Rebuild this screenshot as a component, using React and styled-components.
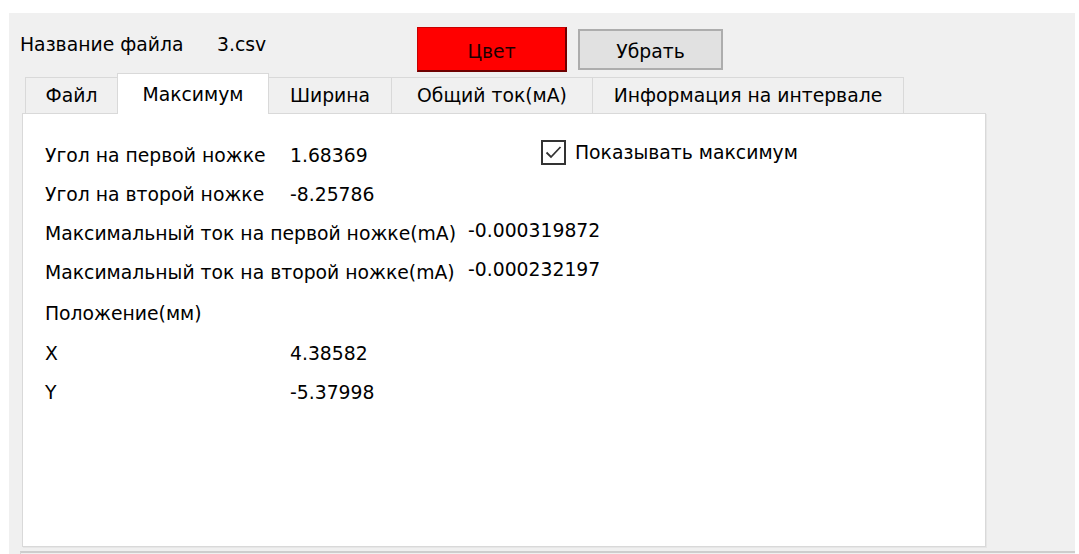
import React from 'react';
import styled, { createGlobalStyle } from 'styled-components';

const Global = createGlobalStyle`
  html, body { margin: 0; padding: 0; background: #ffffff; }
  body {
    font-family: "DejaVu Sans", "Noto Sans", sans-serif;
    font-size: 18.8px;
    color: #000;
  }
`;

const Window = styled.div`
  margin: 13px 4px 0 9px;
  height: 541px;
  background: #f0f0f0;
  display: flex;
  flex-direction: column;
  overflow: hidden;
`;

const Header = styled.div`
  height: 60px;
  display: flex;
  align-items: flex-start;
  padding-left: 11px;
  flex: none;
`;

const Caption = styled.span`
  width: ${p => p.$w}px;
  flex: none;
  padding-top: 21px;
  line-height: 22px;
  white-space: nowrap;
`;

const Actions = styled.div`
  display: flex;
  align-items: center;
  gap: 11px;
  margin-top: 14px;
  height: 45px;
`;

const ColorButton = styled.button`
  box-sizing: border-box;
  width: 150px;
  height: 45px;
  background: #ff0000;
  color: #1a0000;
  font: inherit;
  padding: 4px 0 0;
  border-style: solid;
  border-width: 1px 2px 2px 1px;
  border-color: #c80000 #6e0000 #6e0000 #c80000;
`;

const PlainButton = styled.button`
  box-sizing: border-box;
  width: 145px;
  height: 41px;
  background: #e1e1e1;
  color: #000;
  font: inherit;
  padding: 4px 0 0;
  border: 2px solid #adadad;
`;

const Tabs = styled.div`
  margin-left: 13px;
  width: 964px;
  display: flex;
  flex-direction: column;
  flex: none;
`;

const TabBar = styled.div`
  height: 40px;
  display: flex;
  align-items: flex-end;
  padding-left: 3px;
`;

const Tab = styled.div`
  box-sizing: border-box;
  width: ${p => p.$w}px;
  height: ${p => (p.$active ? 41 : 36)}px;
  margin-left: ${p => (p.$first ? 0 : -1)}px;
  margin-bottom: ${p => (p.$active ? -1 : 0)}px;
  position: relative;
  z-index: ${p => (p.$active ? 2 : 1)};
  border: 1px solid #d9d9d9;
  border-bottom: none;
  background: ${p => (p.$active ? '#ffffff' : '#f0f0f0')};
  display: flex;
  align-items: center;
  justify-content: center;
  white-space: nowrap;
`;

const Pane = styled.div`
  box-sizing: border-box;
  height: 434px;
  border: 1px solid #d9d9d9;
  box-shadow: 1px 1px 0 #e6e6e6;
  background: #ffffff;
  padding: 21px 0 0 22px;
  display: flex;
  flex-direction: column;
`;

const Row = styled.div`
  height: ${p => p.$h}px;
  display: flex;
  align-items: center;
  white-space: nowrap;
`;

const Label = styled.span`
  width: ${p => p.$w}px;
  flex: none;
`;

const Value = styled.span`
  width: ${p => (p.$w ? `${p.$w}px` : 'auto')};
  flex: none;
  padding-bottom: ${p => (p.$lift ? 6 : 0)}px;
`;

const Check = styled.label`
  display: flex;
  align-items: center;
  gap: 9px;
  margin-top: -5px;
`;

const Box = styled.span`
  box-sizing: border-box;
  width: 25px;
  height: 25px;
  border: 2px solid #333333;
  background: #ffffff;
  display: flex;
  align-items: center;
  justify-content: center;
`;

const BottomEdge = styled.div`
  margin: 4px 0 0 11px;
  flex: 1;
  border-top: 2px solid #cdcdcd;
  border-left: 1px solid #d6d6d6;
`;

const tabs = [
  { name: 'Файл', w: 93 },
  { name: 'Максимум', w: 152, active: true },
  { name: 'Ширина', w: 124 },
  { name: 'Общий ток(мА)', w: 202 },
  { name: 'Информация на интервале', w: 312 },
];

export default function App() {
  return (
    <>
      <Global />
      <Window>
        <Header>
          <Caption $w={197}>Название файла</Caption>
          <Caption $w={200}>3.csv</Caption>
          <Actions>
            <ColorButton>Цвет</ColorButton>
            <PlainButton>Убрать</PlainButton>
          </Actions>
        </Header>
        <Tabs>
          <TabBar>
            {tabs.map((t, i) => (
              <Tab key={t.name} $w={t.w} $first={i === 0} $active={t.active}>
                {t.name}
              </Tab>
            ))}
          </TabBar>
          <Pane>
            <Row $h={40}>
              <Label $w={245}>Угол на первой ножке</Label>
              <Value $w={251}>1.68369</Value>
              <Check>
                <Box>
                  <svg width="19" height="19" viewBox="0 0 19 19">
                    <path d="M2.5 9.5 L7 14 L16.5 4" fill="none" stroke="#333" strokeWidth="1.8" />
                  </svg>
                </Box>
                Показывать максимум
              </Check>
            </Row>
            <Row $h={39}>
              <Label $w={245}>Угол на второй ножке</Label>
              <Value>-8.25786</Value>
            </Row>
            <Row $h={38}>
              <Label $w={423}>Максимальный ток на первой ножке(mA)</Label>
              <Value $lift>-0.000319872</Value>
            </Row>
            <Row $h={40}>
              <Label $w={423}>Максимальный ток на второй ножке(mA)</Label>
              <Value $lift>-0.000232197</Value>
            </Row>
            <Row $h={42}>
              <Label $w={245}>Положение(мм)</Label>
            </Row>
            <Row $h={38}>
              <Label $w={245}>X</Label>
              <Value>4.38582</Value>
            </Row>
            <Row $h={40}>
              <Label $w={245}>Y</Label>
              <Value>-5.37998</Value>
            </Row>
          </Pane>
        </Tabs>
        <BottomEdge />
      </Window>
    </>
  );
}
